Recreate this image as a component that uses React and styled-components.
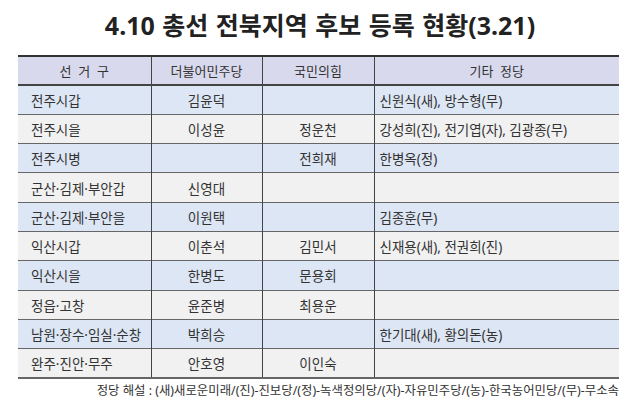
import React from "react";
import styled, { createGlobalStyle } from "styled-components";

const Global = createGlobalStyle`
  html, body { margin: 0; padding: 0; background: #ffffff; }
  body { font-family: "Noto Sans", "Noto Sans CJK KR", sans-serif; color: #333; }
`;

const Page = styled.div`
  width: 640px;
  height: 414px;
  display: flex;
  flex-direction: column;
  align-items: center;
  overflow: hidden;
`;

const Title = styled.h1`
  margin: 0;
  padding-top: 8px;
  height: 55px;
  line-height: 34px;
  font-size: 25px;
  font-weight: 700;
  word-spacing: 1px;
  color: #222;
  text-align: center;
  box-sizing: border-box;
  width: 100%;
`;

const Table = styled.table`
  width: 601px;
  margin-left: 18px;
  align-self: flex-start;
  border-collapse: collapse;
  table-layout: fixed;
  border-top: 2px solid #333;
  border-bottom: 2px solid #666;
  font-size: 13.5px;
`;

const HeadCell = styled.th`
  height: 27px;
  padding: 0;
  background: #d9d9ee;
  font-weight: 400;
  font-size: 13px;
  color: #333;
  text-align: center;
  border-bottom: 2px solid #444;
  border-left: ${(p) => (p.$first ? "none" : "1px solid #444")};
  white-space: pre;
`;

const Row = styled.tr`
  background: ${(p) => (p.$tone === "blue" ? "#dde6f4" : "#f1f1f1")};
  border-bottom: 1px solid #666;
  &:last-child { border-bottom: none; }
`;

const Cell = styled.td`
  height: 29.3px;
  padding: 0 0 0 ${(p) => p.$pad || 0}px;
  text-align: ${(p) => p.$align || "left"};
  color: #333;
  white-space: nowrap;
  border-left: ${(p) => (p.$first ? "none" : "1px solid #444")};
  box-sizing: border-box;
`;

const Note = styled.div`
  align-self: flex-end;
  margin-right: 21px;
  margin-top: 3px;
  font-size: 12.4px;
  line-height: 17px;
  color: #333;
  white-space: pre;
`;

const rows = [
  ["전주시갑", "김윤덕", "", "신원식(새), 방수형(무)"],
  ["전주시을", "이성윤", "정운천", "강성희(진), 전기엽(자), 김광종(무)"],
  ["전주시병", "", "전희재", "한병옥(정)"],
  ["군산·김제·부안갑", "신영대", "", ""],
  ["군산·김제·부안을", "이원택", "", "김종훈(무)"],
  ["익산시갑", "이춘석", "김민서", "신재용(새), 전권희(진)"],
  ["익산시을", "한병도", "문용회", ""],
  ["정읍·고창", "윤준병", "최용운", ""],
  ["남원·장수·임실·순창", "박희승", "", "한기대(새), 황의돈(농)"],
  ["완주·진안·무주", "안호영", "이인숙", ""],
];

export default function App() {
  return (
    <Page>
      <Global />
      <Title>4.10 총선 전북지역 후보 등록 현황(3.21)</Title>
      <Table>
        <colgroup>
          <col style={{ width: 133 }} />
          <col style={{ width: 111 }} />
          <col style={{ width: 112 }} />
          <col style={{ width: 245 }} />
        </colgroup>
        <thead>
          <tr>
            <HeadCell $first>선  거  구</HeadCell>
            <HeadCell>더불어민주당</HeadCell>
            <HeadCell>국민의힘</HeadCell>
            <HeadCell>기타  정당</HeadCell>
          </tr>
        </thead>
        <tbody>
          {rows.map((r, i) => (
            <Row key={r[0]} $tone={i % 2 === 0 ? "blue" : "gray"}>
              <Cell $first $pad={13}>{r[0]}</Cell>
              <Cell $align="center">{r[1]}</Cell>
              <Cell $align="center">{r[2]}</Cell>
              <Cell $pad={5}>{r[3]}</Cell>
            </Row>
          ))}
        </tbody>
      </Table>
      <Note>정당 해설 : (새)새로운미래/(진)-진보당/(정)-녹색정의당/(자)-자유민주당/(농)-한국농어민당/(무)-무소속</Note>
    </Page>
  );
}
